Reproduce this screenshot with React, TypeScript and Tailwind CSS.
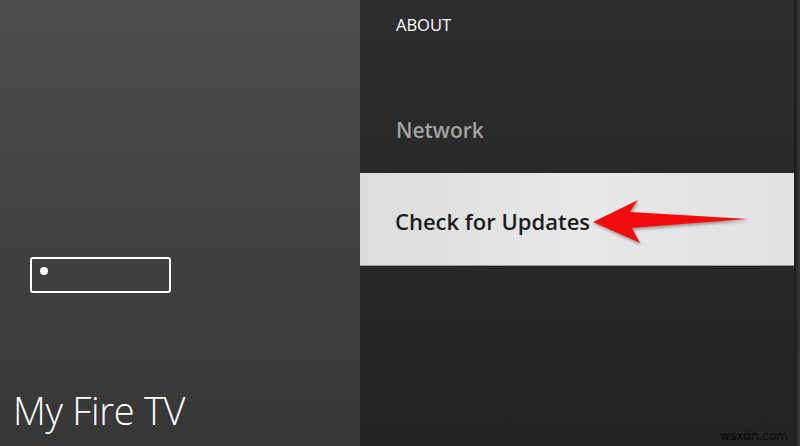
import React from "react";

export default function App() {
  return (
    <div className="flex w-[800px] h-[446px] overflow-hidden" style={{ fontFamily: '"Open Sans", "Noto Sans", sans-serif' }}>
      <div className="relative w-[360px] h-full bg-gradient-to-b from-[#4b4b4b] via-[#434343] to-[#363636] flex flex-col">
        <div className="mt-[257px] ml-[30px] w-[141px] h-[36px] border-2 border-white rounded-[3px] flex items-start">
          <div className="w-[8px] h-[8px] rounded-full bg-white mt-[8px] ml-[8px]" />
        </div>
        <div className="mt-auto mb-[17px] ml-[13px] text-[38px] font-light text-white leading-none tracking-[-0.3px]">My Fire TV</div>
      </div>
      <div className="relative flex-1 h-full flex">
        <div className="flex-1 flex flex-col bg-gradient-to-b from-[#2d2d2d] to-[#232323]">
          <div className="pl-[36px] pt-[15px] text-[16.5px] text-white font-medium leading-[20px]">ABOUT</div>
          <div className="pl-[36px] pt-[83px] text-[21px] text-[#a3a3a3] font-semibold leading-[24px]">Network</div>
          <div className="mt-[31px] h-[93px] bg-gradient-to-r from-[#dcdcdc] via-[#e8e8e8] to-[#e2e2e2] flex items-center pl-[35px] border-b border-[#9a9a9a]">
            <span className="text-[22px] font-semibold text-[#1b1b1b] pt-[4px]">Check for Updates</span>
          </div>
          <div className="mt-auto self-end pr-[6px] pb-[4px] text-[12px] text-[#0c0c0c] leading-none" style={{ fontFamily: '"DejaVu Sans", sans-serif' }}>wsxdn.com</div>
        </div>
        <div className="w-[6px] h-full bg-gradient-to-r from-[#1a1a1a] to-[#3a3a3a]" />
        <svg className="absolute left-0 top-0" width="440" height="446" viewBox="360 0 440 446">
          <defs>
            <filter id="sh" x="-20%" y="-50%" width="140%" height="200%">
              <feDropShadow dx="1" dy="2" stdDeviation="1.5" floodColor="#000" floodOpacity="0.35" />
            </filter>
          </defs>
          <path
            d="M593 222 L638 200 Q633 207 630 212 L748 219 L632 228 Q636 236 640 243 Z"
            fill="#f20d0d"
            filter="url(#sh)"
          />
        </svg>
      </div>
    </div>
  );
}
